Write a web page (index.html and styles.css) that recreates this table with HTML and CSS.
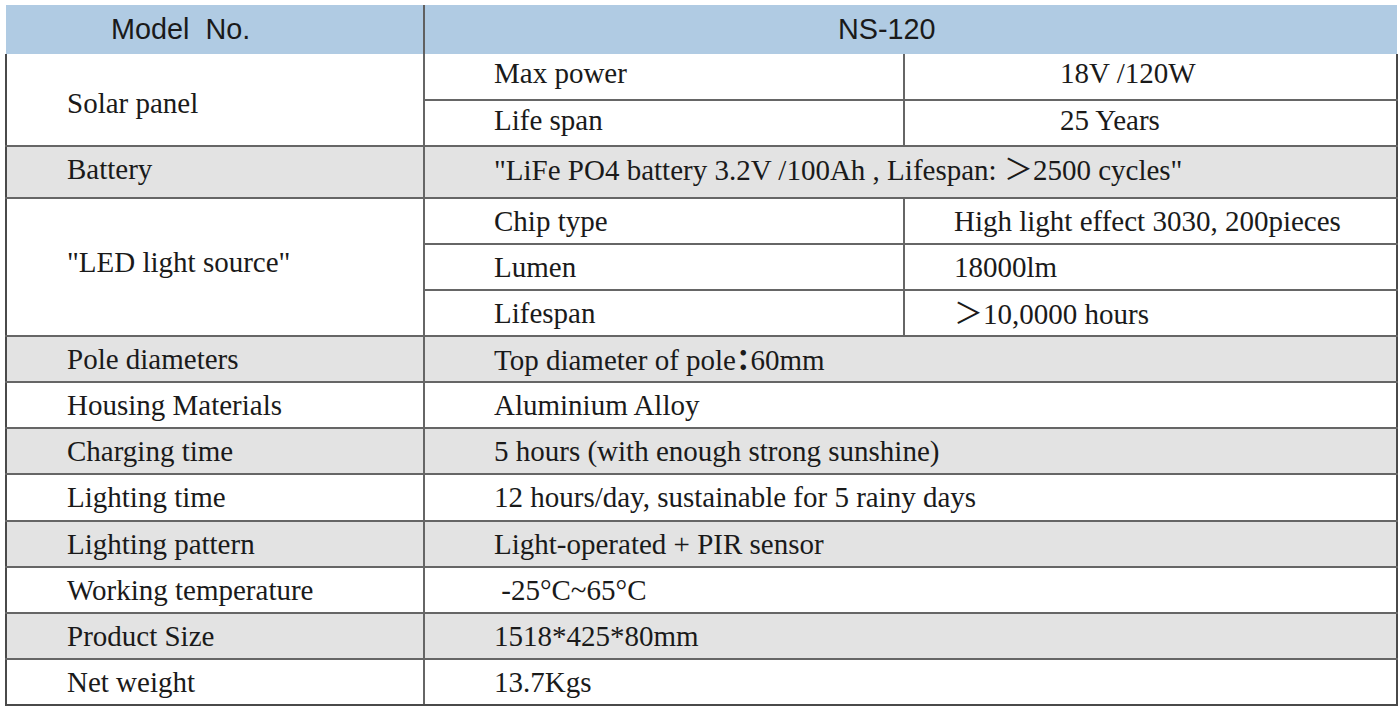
FILE: index.html
```html
<!DOCTYPE html>
<html>
<head>
<meta charset="utf-8">
<link rel="stylesheet" href="styles.css">
</head>
<body>
<table class="spec">
  <colgroup>
    <col class="c1"><col class="c2"><col class="c3">
  </colgroup>
  <tr class="head">
    <th class="h-model">Model&nbsp; No.</th>
    <th class="h-val" colspan="2">NS-120</th>
  </tr>
  <tr class="r first up">
    <td class="k solar" rowspan="2">Solar panel</td>
    <td class="s">Max power</td>
    <td class="vc">18V /120W</td>
  </tr>
  <tr class="r up">
    <td class="s">Life span</td>
    <td class="vc">25 Years</td>
  </tr>
  <tr class="r tall gray up">
    <td class="k">Battery</td>
    <td class="s" colspan="2">"LiFe PO4 battery 3.2V /100Ah , Lifespan: <span class="fw">＞</span>2500 cycles"</td>
  </tr>
  <tr class="r">
    <td class="k led" rowspan="3">"LED light source"</td>
    <td class="s">Chip type</td>
    <td class="v">High light effect 3030, 200pieces</td>
  </tr>
  <tr class="r">
    <td class="s">Lumen</td>
    <td class="v">18000lm</td>
  </tr>
  <tr class="r">
    <td class="s">Lifespan</td>
    <td class="v"><span class="fw">＞</span>10,0000 hours</td>
  </tr>
  <tr class="r gray">
    <td class="k">Pole diameters</td>
    <td class="s" colspan="2">Top diameter of pole<span class="fw colon">：</span>60mm</td>
  </tr>
  <tr class="r">
    <td class="k">Housing Materials</td>
    <td class="s" colspan="2">Aluminium Alloy</td>
  </tr>
  <tr class="r gray">
    <td class="k">Charging time</td>
    <td class="s" colspan="2">5 hours (with enough strong sunshine)</td>
  </tr>
  <tr class="r plus">
    <td class="k">Lighting time</td>
    <td class="s" colspan="2">12 hours/day, sustainable for 5 rainy days</td>
  </tr>
  <tr class="r gray">
    <td class="k">Lighting pattern</td>
    <td class="s" colspan="2">Light-operated + PIR sensor</td>
  </tr>
  <tr class="r">
    <td class="k">Working temperature</td>
    <td class="s" colspan="2">&nbsp;-25°C~65°C</td>
  </tr>
  <tr class="r gray">
    <td class="k">Product Size</td>
    <td class="s" colspan="2">1518*425*80mm</td>
  </tr>
  <tr class="r">
    <td class="k">Net weight</td>
    <td class="s" colspan="2">13.7Kgs</td>
  </tr>
</table>
</body>
</html>
```

FILE: styles.css
```css
html, body {
  margin: 0;
  padding: 0;
  background: #ffffff;
}

.spec {
  margin: 5px 0 0 5px;
  border-collapse: collapse;
  table-layout: fixed;
  width: 1391px;
  color: #1a1a1a;
}

.c1 { width: 418px; }
.c2 { width: 480px; }
.c3 { width: 493px; }

.head th {
  background: #b0cbe3;
  height: 49px;
  padding: 0;
  font-family: "Liberation Sans", Arial, sans-serif;
  font-size: 28.8px;
  font-weight: normal;
  text-align: left;
  vertical-align: middle;
  color: #1a1a1a;
  border: none;
}

.head .h-model {
  padding-left: 105px;
  border-right: 2px solid #606060;
}

.head .h-val {
  padding-left: 413px;
}

.r td {
  height: 46px;
  padding: 0;
  box-sizing: border-box;
  font-family: "Liberation Serif", "Times New Roman", serif;
  font-size: 29px;
  line-height: 1;
  vertical-align: middle;
  text-align: left;
  border: 2px solid #666666;
  white-space: nowrap;
}

.r.first td { border-top-style: hidden; }

.r.up td { padding-bottom: 6px; }

.r.tall td { height: 52px; }

.r.plus td { height: 47px; }

.gray td { background: #e3e3e3; }

.spec tr:not(.head) td:first-child { border-left-color: #4a4a4a; }
.spec tr:not(.head) td:last-child { border-right-color: #4a4a4a; }
.spec tr:last-child td { border-bottom-color: #4a4a4a; }

.r td.k { padding-left: 60px; }
.r td.solar { padding-top: 8px; padding-bottom: 0; }
.r td.led { padding-bottom: 9px; }
.r td.s { padding-left: 69px; }
.r td.v { padding-left: 49px; }
.r td.vc { padding-left: 155px; }

.fw {
  font-family: "Noto Sans CJK SC", "Liberation Serif", serif;
}

.colon {
  font-feature-settings: "halt" 1;
  font-weight: bold;
}
```
